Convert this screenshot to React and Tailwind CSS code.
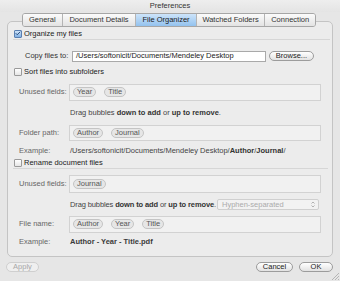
import {Check} from "lucide-react";

const tabs = [
    {label: "General", w: "w-[39px]"},
    {label: "Document Details", w: "w-[74px]"},
    {label: "File Organizer", w: "w-[61px]", active: true},
    {label: "Watched Folders", w: "w-[69px]"},
    {label: "Connection", w: "w-[51px]"},
];

const Checkbox = ({checked}) => (
    <span
        className={
            checked
                ? "flex items-center justify-center w-[8px] h-[8px] rounded-[1px] border border-[#5a7fb0] bg-gradient-to-b from-[#cfe3f8] to-[#7eaee2]"
                : "w-[8px] h-[8px] rounded-[1px] border border-[#9a9a9a] bg-gradient-to-b from-white to-[#e6e6e6]"
        }
    >
        {checked && <Check size={7} strokeWidth={3.5} className="text-[#1d3f6e]" />}
    </span>
);

const Bubble = ({children}) => (
    <span className="flex items-center h-[10px] px-[3px] rounded-full border border-[#c4c4c4] bg-[#e6e6e6] text-[#555] leading-none">
        {children}
    </span>
);

const FieldRow = ({label, items, height = "h-[17px]", className = ""}) => (
    <div className={`flex items-center ${className}`}>
        <span className="ml-[11px] w-[50px] text-[#666]">{label}</span>
        <div className={`flex items-center gap-[8px] pl-[3px] w-[252px] ${height} border border-[#d2d2d2] bg-[#f1f1f1]`}>
            {items.map((it) => (
                <Bubble key={it}>{it}</Bubble>
            ))}
        </div>
    </div>
);

const PillButton = ({children, w, disabled}) => (
    <button
        className={`flex items-center justify-center h-[10px] ${w} rounded-full border leading-none ${
            disabled
                ? "border-[#cfcfcf] bg-[#efefef] text-[#a8a8a8]"
                : "border-[#9c9c9c] bg-gradient-to-b from-white to-[#e2e2e2] text-[#222]"
        }`}
    >
        {children}
    </button>
);

const DragHint = ({className = ""}) => (
    <span className={`text-[#444] whitespace-nowrap ${className}`}>
        Drag bubbles <b className="text-[#333]">down to add</b> or <b className="text-[#333]">up to remove</b>.
    </span>
);

export default function App() {
    return (
        <div className="w-[340px] h-[281px] overflow-hidden bg-[#e6e6e6] flex flex-col font-['Liberation_Sans',Arial,sans-serif] text-[7.5px] leading-none text-[#222]">
            {/* title bar */}
            <div className="h-[12px] flex items-center justify-center text-[#333] bg-gradient-to-b from-[#eeeeee] to-[#e4e4e4]">
                Preferences
            </div>

            {/* tabs */}
            <div className="relative z-10 flex h-[14px] ml-[22px] mt-[1px] -mb-[6px] w-[294px] rounded-[3px] border border-[#a6a6a6] overflow-hidden">
                {tabs.map((t, i) => (
                    <div
                        key={t.label}
                        className={`flex items-center justify-center ${t.w} ${i > 0 ? "border-l border-[#b4b4b4]" : ""} ${
                            t.active
                                ? "bg-gradient-to-b from-[#cde4fa] to-[#93c2ee] text-[#1b1b1b]"
                                : "bg-gradient-to-b from-[#fbfbfb] to-[#e3e3e3] text-[#333]"
                        }`}
                    >
                        {t.label}
                    </div>
                ))}
            </div>

            {/* group box */}
            <div className="ml-[7px] w-[326px] h-[240px] rounded-[5px] border border-[#c4c4c4] bg-[#ececec] flex flex-col">
                <div className="flex items-center h-[11px] mt-[7px] ml-[5px] mr-[2px] border-b border-[#d6d6d6]">
                    <div className="flex items-center gap-[2px] ml-[1px]">
                        <Checkbox checked />
                        <span>Organize my files</span>
                    </div>
                </div>

                <div className="flex items-center h-[11px] mt-[11px]">
                    <span className="ml-[17px] w-[47px] text-[#333]">Copy files to:</span>
                    <div className="flex items-center w-[194px] h-[11px] pl-[3px] border border-[#a9a9a9] bg-white text-[#222]">
                        /Users/softonicit/Documents/Mendeley Desktop
                    </div>
                    <div className="ml-[3px]">
                        <PillButton w="w-[45px]">Browse...</PillButton>
                    </div>
                </div>

                <div className="flex items-center gap-[2px] ml-[6px] h-[12px] mt-[4px]">
                    <Checkbox />
                    <span>Sort files into subfolders</span>
                </div>

                <FieldRow label="Unused fields:" items={["Year", "Title"]} className="mt-[6px]" />

                <div className="flex items-center h-[12px] mt-[6px] ml-[62px]">
                    <DragHint />
                </div>

                <FieldRow label="Folder path:" items={["Author", "Journal"]} height="h-[16px]" className="mt-[6px]" />

                <div className="flex items-center h-[12px] mt-[4px]">
                    <span className="ml-[11px] w-[51px] text-[#666]">Example:</span>
                    <span className="text-[#444]">
                        /Users/softonicit/Documents/Mendeley Desktop/<b className="text-[#333]">Author</b>/
                        <b className="text-[#333]">Journal</b>/
                    </span>
                </div>

                <div className="flex items-center h-[10px] mt-[2px] ml-[5px] mr-[4px] border-b border-[#d6d6d6]">
                    <div className="flex items-center gap-[2px] ml-[1px]">
                        <Checkbox />
                        <span>Rename document files</span>
                    </div>
                </div>

                <FieldRow label="Unused fields:" items={["Journal"]} height="h-[18px]" className="mt-[6px]" />

                <div className="flex items-center h-[12px] mt-[6px]">
                    <DragHint className="ml-[62px] tracking-[-0.12px]" />
                    <div className="ml-auto mr-[13px] flex items-center justify-between w-[102px] h-[11px] pl-[4px] pr-[3px] rounded-[2px] border border-[#cfcfcf] bg-[#f2f2f2] text-[#ababab]">
                        <span>Hyphen-separated</span>
                        <svg width="4" height="7" viewBox="0 0 4 7" className="text-[#a0a0a0]">
                            <path d="M0.5 2.5 L2 1 L3.5 2.5 M0.5 4.5 L2 6 L3.5 4.5" fill="none" stroke="currentColor" strokeWidth="0.8" />
                        </svg>
                    </div>
                </div>

                <FieldRow label="File name:" items={["Author", "Year", "Title"]} className="mt-[5px]" />

                <div className="flex items-center h-[12px] mt-[3px]">
                    <span className="ml-[11px] w-[51px] text-[#666]">Example:</span>
                    <b className="text-[#3a3a3a]">Author - Year - Title.pdf</b>
                </div>
            </div>

            {/* footer buttons */}
            <div className="flex items-center h-[10px] mt-[5px]">
                <div className="ml-[6px]">
                    <PillButton w="w-[33px]" disabled>Apply</PillButton>
                </div>
                <div className="ml-auto flex gap-[6px] mr-[7px]">
                    <PillButton w="w-[37px]">Cancel</PillButton>
                    <PillButton w="w-[34px]">OK</PillButton>
                </div>
            </div>
            <div className="flex justify-end mt-auto mr-[1px] mb-[1px]">
                <svg width="8" height="8" viewBox="0 0 8 8">
                    <path d="M1 8 L8 1 M4 8 L8 4 M7 8 L8 7" stroke="#a8a8a8" strokeWidth="0.8" />
                </svg>
            </div>
        </div>
    );
}
